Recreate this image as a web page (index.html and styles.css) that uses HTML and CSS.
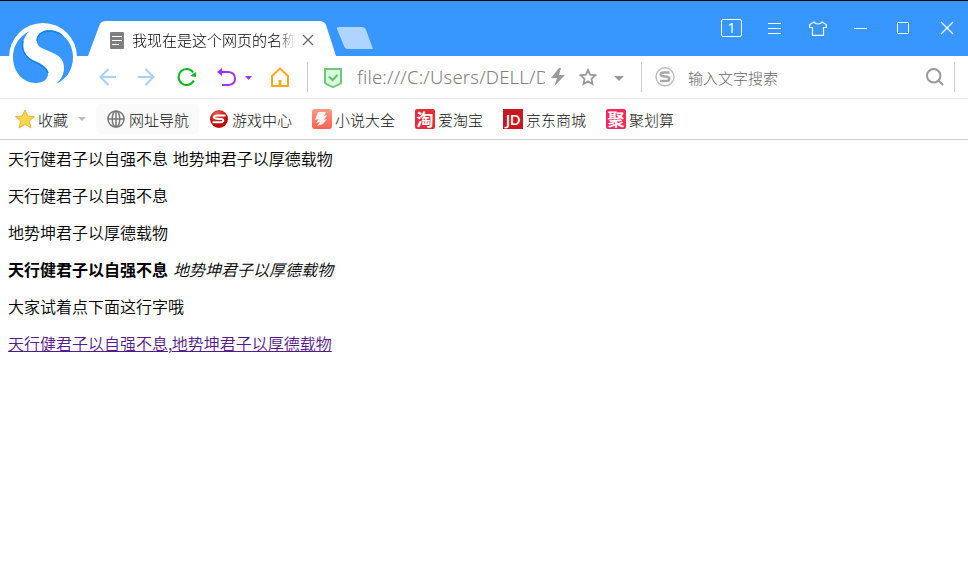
FILE: index.html
```html
<!DOCTYPE html>
<html lang="zh-CN">
<head>
<meta charset="utf-8">
<title>我现在是这个网页的名称</title>
<link rel="stylesheet" href="styles.css">
</head>
<body>
<header class="browser">
  <svg class="logo" viewBox="0 0 68 66">
    <circle cx="34" cy="34" r="34" fill="#fff"/>
    <path d="M21 8C10 13 4 23 4 34C4 49 14 60 27 60C34 60 39 56 39 51C39 45 33 42 25 38C17 34 14 29 14 22C14 16 17 11 21 8Z" fill="#3797ff"/>
    <path d="M28 18C28 11 33 7 40 7C54 8 64 20 64 34C64 46 58 56 47 61C53 56 55 50 55 45C55 37 51 33 44 30L35 26C30 24 28 22 28 18Z" fill="#3797ff"/>
    <path d="M14 18C12 27 15 33 24 38C33 42 38 45 39 50M28 18C28 12 33 8 40 8Q47 8 53 12" fill="none" stroke="#1683ee" stroke-width="1.500"/>
  </svg>
  <div class="titlebar">
    <div class="tab">
      <svg class="tab-shape" viewBox="0 0 248 35"><path d="M0 35L11.500 4Q13 0 18 0H231Q236 0 238 4L248 35Z" fill="#fff"/></svg>
      <svg class="doc" viewBox="0 0 14 17"><rect width="14" height="17" rx="1" fill="#7f7f7f"/><path d="M2 4.500H12M2 8.500H12M2 12.500H9" stroke="#fff"/></svg>
      <span class="tab-title">我现在是这个网页的名称</span>
      <svg class="tab-close" viewBox="0 0 12 12"><path d="M1 1L11 11M11 1L1 11" fill="none" stroke="#666" stroke-width="1.200"/></svg>
    </div>
    <svg class="newtab" viewBox="0 0 36 22"><path d="M2 0H25Q28 0 29 3L36 22H11Q8 22 7 19L0 2Q-1 0 2 0Z" fill="#afd5ff"/></svg>
    <div class="controls">
      <span class="count">1</span>
      <svg class="menu" viewBox="0 0 14 13"><path d="M0 1.500H13M0 6.500H13M0 11.500H13"/></svg>
      <svg class="shirt" viewBox="0 0 18 15"><path d="M5 1L.7 3.500V6.500H3.500V14.300H14.500V6.500H17.300V3.500L13 1Q12 3 9 3T5 1Z"/></svg>
      <svg class="minimise" viewBox="0 0 13 12"><path d="M0 6.500H13"/></svg>
      <svg class="maximise" viewBox="0 0 12 12"><rect x=".5" y=".5" width="11" height="11" rx=".5"/></svg>
      <svg class="close" viewBox="0 0 12 12"><path d="M0 0L12 12M12 0L0 12"/></svg>
    </div>
  </div>
  <div class="toolbar">
    <svg class="back" viewBox="0 0 18 18"><path d="M9.500 1L1.500 9L9.500 17M1.500 9H17"/></svg>
    <svg class="forward" viewBox="0 0 18 18"><path d="M8.500 1L16.500 9L8.500 17M16.500 9H1"/></svg>
    <svg class="reload" viewBox="0 0 20 18"><path d="M16.200 4.500A8 8 0 1 0 16.800 12.500" fill="none" stroke="#0bb823" stroke-width="2"/><path d="M13 8L19 4V9Z" fill="#0bb823"/></svg>
    <svg class="undo" viewBox="0 0 20 18"><path d="M4 4H11.500Q18 4.500 18 10.500T11.500 17H5" fill="none" stroke="#9b35f3" stroke-width="2"/><path d="M0 4L5 0V8Z" fill="#9b35f3"/></svg>
    <svg class="undo-caret" viewBox="0 0 7 4"><path d="M0 0H7L3.500 4Z" fill="#9b35f3"/></svg>
    <svg class="home" viewBox="0 0 18 20"><path d="M1 19V9L9 1.500L17 9V19Z" fill="none" stroke="#ffa81a" stroke-width="2"/><path d="M7.600 13H10.400V19H7.600Z" fill="#ffa81a"/></svg>
    <i class="sep sep-address"></i>
    <svg class="shield" viewBox="0 0 18 20"><path d="M1 1H17V15Q13 18 9 19Q5 18 1 15Z" fill="#d6ffda" stroke="#72c57d" stroke-width="2"/><path d="M5 8.500L8.500 12L13.500 7" fill="none" stroke="#65bd71" stroke-width="2"/></svg>
    <span class="url">file:///C:/Users/DELL/D</span>
    <svg class="bolt" viewBox="0 0 14 18"><path d="M8 0L0 10H6L3.500 18L14 7H8L10 0Z" fill="#999"/></svg>
    <svg class="favourite" viewBox="0 0 18 18"><path d="M9 2L11.100 6.700L16.300 7.300L12.500 10.800L13.500 16L9 13.400L4.500 16L5.500 10.800L1.700 7.300L6.900 6.700Z" fill="none" stroke="#999" stroke-width="1.800"/></svg>
    <svg class="url-caret" viewBox="0 0 10 5"><path d="M0 0H10L5 5Z" fill="#999"/></svg>
    <i class="sep sep-search"></i>
    <svg class="sogou" viewBox="0 0 20 20"><circle cx="10" cy="9.800" r="9" fill="none" stroke="#bbb" stroke-width="1.400"/><path d="M14.500 5.500H8.500C4.500 5.500 5 9 8 9.300L12 9.800C15.500 10.500 15 14 11.500 14H5" fill="none" stroke="#aaa" stroke-width="2.400"/></svg>
    <span class="placeholder">输入文字搜索</span>
    <svg class="search" viewBox="0 0 18 18"><circle cx="7.700" cy="7.700" r="6.700"/><path d="M12.500 12.500L17 17"/></svg>
    <i class="sep sep-end"></i>
  </div>
  <nav class="bookmarks">
    <div class="bookmark favourites">
      <svg class="gold" viewBox="0 0 20 20"><path d="M10 1L12.700 7L19.500 7.700L14.300 12L16 19L10 15.400L4 19L5.700 12L.5 7.700L7.300 7Z" fill="#f9d64a" stroke="#eab54c"/></svg>
      <span>收藏</span>
      <svg class="fav-caret" viewBox="0 0 8 4"><path d="M0 0H8L4 4Z" fill="#bbb"/></svg>
    </div>
    <div class="bookmark site">
      <svg class="globe" viewBox="0 0 18 18"><circle cx="9" cy="9" r="8"/><ellipse cx="9" cy="9" rx="3.800" ry="8"/><path d="M1 9H17M9 1V17"/></svg>
      <span>网址导航</span>
    </div>
    <div class="bookmark games">
      <svg viewBox="0 0 20 20"><defs><radialGradient id="red" cx=".4" cy=".25"><stop stop-color="#ee6652"/><stop offset="1" stop-color="#b90e0b"/></radialGradient></defs><circle cx="10" cy="10" r="9" fill="url(#red)"/><path d="M16.500 6.500H8Q4 7 5 8.800Q7 9.800 12.500 10Q16 11 13 13.300H3.500" fill="none" stroke="#fff" stroke-width="2"/></svg>
      <span>游戏中心</span>
    </div>
    <div class="bookmark novels">
      <svg viewBox="0 0 20 20"><defs><linearGradient id="coral" x2="0" y2="1"><stop stop-color="#ff9a86"/><stop offset="1" stop-color="#ff604e"/></linearGradient></defs><rect width="20" height="20" rx="3" fill="url(#coral)"/><path d="M6 3H14L12 7L15 6L12 11L15 10L11 15L5 17L8 13L4 14L7 10L3 11Z" fill="#fff" opacity=".9"/></svg>
      <span>小说大全</span>
    </div>
    <div class="bookmark taobao"><span class="badge">淘</span><span>爱淘宝</span></div>
    <div class="bookmark jd"><span class="badge">JD</span><span>京东商城</span></div>
    <div class="bookmark ju"><span class="badge">聚</span><span>聚划算</span></div>
  </nav>
</header>
<main class="page">
  <p>天行健君子以自强不息 地势坤君子以厚德载物</p>
  <p>天行健君子以自强不息</p>
  <p>地势坤君子以厚德载物</p>
  <p><b>天行健君子以自强不息</b> <em>地势坤君子以厚德载物</em></p>
  <p>大家试着点下面这行字哦</p>
  <p><a href="#">天行健君子以自强不息<span class="comma">,</span>地势坤君子以厚德载物</a></p>
</main>
</body>
</html>
```
FILE: styles.css
```css
* { box-sizing: border-box; }
body {
  margin: 0;
  height: 580px;
  overflow: hidden;
  background: #fff;
  color: #000;
  font-family: "Noto Sans", "Noto Sans CJK SC", sans-serif;
}
svg { display: block; flex: none; }
.browser { position: relative; font-family: "Noto Sans CJK SC", sans-serif; font-weight: 300; white-space: nowrap; }
.logo { position: absolute; left: 9px; top: 23px; width: 68px; height: 66px; }

.titlebar { display: flex; height: 56px; padding-left: 88px; border-top: 1px solid #000; background: #3797ff; }
.tab { position: relative; display: flex; width: 248px; height: 35px; margin-top: 20px; padding-left: 22px; }
.tab-shape { position: absolute; left: 0; top: 0; width: 248px; height: 35px; }
.doc { position: relative; width: 14px; height: 17px; margin-top: 11px; }
.tab-title {
  position: relative;
  width: 162px;
  margin: 8px 0 0 8px;
  overflow: hidden;
  font-size: 15px;
  line-height: 22px;
  height: 22px;
  color: #000;
  -webkit-mask-image: linear-gradient(to right, #000 90%, rgba(0, 0, 0, 0.1));
  mask-image: linear-gradient(to right, #000 90%, rgba(0, 0, 0, 0.1));
}
.tab-close { position: relative; width: 12px; height: 12px; margin: 13px 0 0 8px; }
.newtab { width: 36px; height: 22px; margin: 26px 0 0 1px; }
.controls { display: flex; align-items: center; height: 54px; margin-left: 348px; }
.controls svg { overflow: visible; fill: none; stroke: #fff; stroke-width: 1; }
.count { width: 21px; height: 18px; border: 1px solid #fff; border-radius: 2px; color: #fff; font: 14px/16px "Noto Sans", sans-serif; text-align: center; }
.menu { width: 14px; height: 13px; margin-left: 26px; }
.controls .shirt { width: 18px; height: 15px; margin-left: 27px; stroke-width: 1.2; }
.minimise { width: 13px; height: 12px; margin-left: 27px; }
.maximise { width: 12px; height: 12px; margin-left: 30px; }
.controls .close { width: 12px; height: 12px; margin-left: 32px; stroke-width: 1.2; }

.toolbar { display: flex; align-items: center; height: 43px; padding-left: 99px; border-bottom: 1px solid #e5e5e5; }
.back, .forward { width: 18px; height: 18px; fill: none; stroke: #a9d0ff; stroke-width: 2; }
.forward { margin-left: 20px; }
.reload { width: 20px; height: 18px; margin-left: 22px; }
.undo { width: 20px; height: 18px; margin-left: 20px; }
.undo-caret { width: 7px; height: 4px; margin: 2px 0 0 8px; }
.home { width: 18px; height: 20px; margin-left: 19px; }
.sep { flex: none; width: 1px; height: 30px; background: #ccc; }
.sep-address { margin-left: 18px; }
.shield { width: 18px; height: 20px; margin: 1px 0 0 16px; }
.url { width: 188px; margin-left: 15px; overflow: hidden; font: 350 18.5px/28px "Noto Sans", "Open Sans", sans-serif; color: #808080; letter-spacing: 0.2px; }
.bolt { width: 14px; height: 18px; margin-left: 6px; }
.favourite { width: 18px; height: 18px; margin-left: 14px; }
.url-caret { width: 10px; height: 5px; margin: 3px 0 0 17px; }
.sep-search { margin-left: 17px; }
.sogou { width: 20px; height: 20px; margin-left: 13px; }
.placeholder { margin: 2px 0 0 13px; width: 238px; font-size: 15px; line-height: 22px; color: #666; }
.search { width: 18px; height: 18px; fill: none; stroke: #999; stroke-width: 2; }
.sep-end { margin-left: 10px; }

.bookmarks { display: flex; align-items: center; height: 41px; padding-left: 15px; border-bottom: 1px solid #ccc; font-size: 15px; line-height: 22px; color: #111; }
.bookmark { display: flex; align-items: center; gap: 3px; }
.bookmark > span:not(.badge) { padding-top: 1px; }
.bookmark svg { width: 20px; height: 20px; }
.bookmark .fav-caret { width: 8px; height: 4px; margin-left: 7px; }
.bookmark .globe { width: 18px; height: 18px; fill: none; stroke: #777; stroke-width: 1.5; }
.site { width: 103px; height: 30px; margin-left: 10px; padding-left: 11px; gap: 4px; border-radius: 4px; background: #fafafa; }
.games { margin-left: 10px; }
.novels { margin-left: 20px; }
.taobao { margin-left: 20px; }
.jd, .ju { margin-left: 20px; }
.badge { width: 20px; height: 20px; border-radius: 2px; background: #e52c3b; color: #fff; font-weight: 700; font-size: 17px; line-height: 19px; text-align: center; }
.jd .badge { background: #c91623; border-radius: 0; font: 600 15px/20px "Open Sans", sans-serif; letter-spacing: -0.5px; }
.ju .badge { background: #fa2657; }

.page { padding: 8px; font-family: "Noto Sans CJK SC", sans-serif; }
.page p { height: 21px; margin: 0 0 16px; font-size: 16px; line-height: 21px; font-weight: 350; word-spacing: 1.3px; }
.page b { font-weight: 700; }
.page a { color: #551a8b; text-decoration: underline; }
.comma { letter-spacing: -0.6px; }
```
